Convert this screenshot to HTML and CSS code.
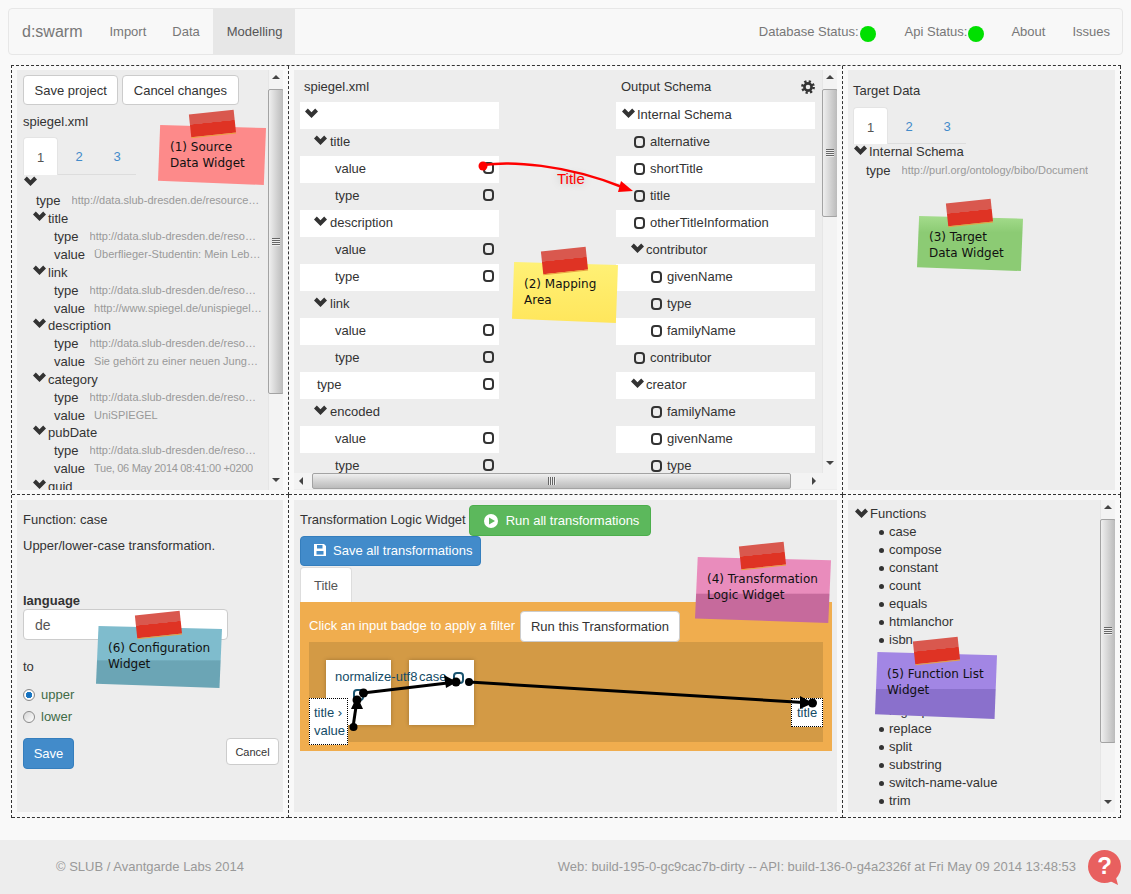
FILE: index.html
```html
<!DOCTYPE html>
<html lang="en">
<head>
    <meta charset="UTF-8">
    <title>d:swarm</title>
    <link rel="stylesheet" href="styles.css">
</head>
<body>
    <svg class="defs" width="0" height="0">
        <symbol id="chev" viewBox="0 0 12 9"><polygon points="0,3 2.6,0.4 6,3.8 9.4,0.4 12,3 6,9" /></symbol>
    </svg>

    <nav class="navbar">
        <span class="brand">d:swarm</span>
        <a class="nav-link">Import</a>
        <a class="nav-link">Data</a>
        <a class="nav-link active">Modelling</a>
        <span class="nav-right">
            <a class="nav-status db">Database Status:<i class="dot"></i></a>
            <a class="nav-status">Api Status:<i class="dot"></i></a>
            <a class="nav-link">About</a>
            <a class="nav-link">Issues</a>
        </span>
    </nav>

    <div class="workspace">
        <!-- source data -->
        <section class="cell">
            <div class="panel panel-row">
                <div class="panel-body">
                    <div class="btn-row">
                        <button class="btn">Save project</button>
                        <button class="btn">Cancel changes</button>
                    </div>
                    <div class="file-name">spiegel.xml</div>
                    <ul class="tabs">
                        <li class="tab active">1</li>
                        <li class="tab">2</li>
                        <li class="tab">3</li>
                    </ul>
                    <div class="tree">
                        <div class="t-row"><svg class="chev"><use href="#chev"/></svg></div>
                        <div class="t-row lv1 is-type"><span>type</span><em>http://data.slub-dresden.de/resources/1/schema#type</em></div>
                        <div class="t-row lv0"><svg class="chev"><use href="#chev"/></svg><span>title</span></div>
                        <div class="t-row lv2 is-type"><span>type</span><em>http://data.slub-dresden.de/resources/1/schema</em></div>
                        <div class="t-row lv2"><span>value</span><em>Überflieger-Studentin: Mein Leben als Wunderkind</em></div>
                        <div class="t-row lv0"><svg class="chev"><use href="#chev"/></svg><span>link</span></div>
                        <div class="t-row lv2 is-type"><span>type</span><em>http://data.slub-dresden.de/resources/1/schema</em></div>
                        <div class="t-row lv2"><span>value</span><em>http://www.spiegel.de/unispiegel/studium/artikel</em></div>
                        <div class="t-row lv0"><svg class="chev"><use href="#chev"/></svg><span>description</span></div>
                        <div class="t-row lv2 is-type"><span>type</span><em>http://data.slub-dresden.de/resources/1/schema</em></div>
                        <div class="t-row lv2"><span>value</span><em>Sie gehört zu einer neuen Jungen Generation</em></div>
                        <div class="t-row lv0"><svg class="chev"><use href="#chev"/></svg><span>category</span></div>
                        <div class="t-row lv2 is-type"><span>type</span><em>http://data.slub-dresden.de/resources/1/schema</em></div>
                        <div class="t-row lv2"><span>value</span><em>UniSPIEGEL</em></div>
                        <div class="t-row lv0"><svg class="chev"><use href="#chev"/></svg><span>pubDate</span></div>
                        <div class="t-row lv2 is-type"><span>type</span><em>http://data.slub-dresden.de/resources/1/schema</em></div>
                        <div class="t-row lv2"><span>value</span><em class="date">Tue, 06 May 2014 08:41:00 +0200</em></div>
                        <div class="t-row lv0"><svg class="chev"><use href="#chev"/></svg><span>guid</span></div>
                    </div>
                </div>
                <div class="vscroll">
                    <i class="arrow up"></i>
                    <div class="thumb thumb-source"><i class="grip"></i></div>
                    <i class="arrow down"></i>
                </div>
            </div>
        </section>

        <!-- mapping area -->
        <section class="cell">
            <div class="panel panel-col">
                <div class="map-view">
                    <div class="map-body">
                        <div class="map-col">
                            <div class="map-head">spiegel.xml</div>
                            <div class="m-row"><svg class="chev m5"><use href="#chev"/></svg></div>
                            <div class="m-row"><svg class="chev m14"><use href="#chev"/></svg><span>title</span></div>
                            <div class="m-row leaf"><span>value</span><i class="port"></i></div>
                            <div class="m-row leaf"><span>type</span><i class="port"></i></div>
                            <div class="m-row"><svg class="chev m14"><use href="#chev"/></svg><span>description</span></div>
                            <div class="m-row leaf"><span>value</span><i class="port"></i></div>
                            <div class="m-row leaf"><span>type</span><i class="port"></i></div>
                            <div class="m-row"><svg class="chev m14"><use href="#chev"/></svg><span>link</span></div>
                            <div class="m-row leaf"><span>value</span><i class="port"></i></div>
                            <div class="m-row leaf"><span>type</span><i class="port"></i></div>
                            <div class="m-row root-leaf"><span>type</span><i class="port"></i></div>
                            <div class="m-row"><svg class="chev m14"><use href="#chev"/></svg><span>encoded</span></div>
                            <div class="m-row leaf"><span>value</span><i class="port"></i></div>
                            <div class="m-row leaf"><span>type</span><i class="port"></i></div>
                        </div>
                        <div class="map-col out">
                            <div class="map-head">Output Schema
                                <svg class="gear" viewBox="0 0 14 14"><circle cx="7" cy="7" r="3.6" fill="none" stroke="#333" stroke-width="2.6"/><circle cx="7" cy="7" r="5.6" fill="none" stroke="#333" stroke-width="2.6" stroke-dasharray="2.2 2.2"/></svg>
                            </div>
                            <div class="m-row"><svg class="chev m6"><use href="#chev"/></svg><span>Internal Schema</span></div>
                            <div class="m-row o1"><i class="port"></i><span>alternative</span></div>
                            <div class="m-row o1"><i class="port"></i><span>shortTitle</span></div>
                            <div class="m-row o1"><i class="port"></i><span>title</span></div>
                            <div class="m-row o1"><i class="port"></i><span>otherTitleInformation</span></div>
                            <div class="m-row"><svg class="chev m15"><use href="#chev"/></svg><span>contributor</span></div>
                            <div class="m-row o2"><i class="port"></i><span>givenName</span></div>
                            <div class="m-row o2"><i class="port"></i><span>type</span></div>
                            <div class="m-row o2"><i class="port"></i><span>familyName</span></div>
                            <div class="m-row o1"><i class="port"></i><span>contributor</span></div>
                            <div class="m-row"><svg class="chev m15"><use href="#chev"/></svg><span>creator</span></div>
                            <div class="m-row o2"><i class="port"></i><span>familyName</span></div>
                            <div class="m-row o2"><i class="port"></i><span>givenName</span></div>
                            <div class="m-row o2"><i class="port"></i><span>type</span></div>
                        </div>
                    </div>
                    <div class="vscroll">
                        <i class="arrow up"></i>
                        <div class="thumb thumb-map"><i class="grip"></i></div>
                        <i class="arrow down"></i>
                    </div>
                </div>
                <div class="hscroll">
                    <i class="arrow left"></i>
                    <div class="thumb-h"><i class="grip-h"></i></div>
                    <i class="arrow right"></i>
                </div>
            </div>
        </section>

        <!-- target data -->
        <section class="cell">
            <div class="panel target">
                <div class="target-title">Target Data</div>
                <ul class="tabs">
                    <li class="tab active">1</li>
                    <li class="tab">2</li>
                    <li class="tab">3</li>
                </ul>
                <div class="tree tree-target">
                    <div class="t-row"><svg class="chev"><use href="#chev"/></svg><span>Internal Schema</span></div>
                    <div class="t-row lv1-t is-type"><span>type</span><em>http://purl.org/ontology/bibo/Document</em></div>
                </div>
            </div>
        </section>

        <!-- configuration -->
        <section class="cell cell-low">
            <div class="panel config">
                <p class="fn-title">Function: case</p>
                <p class="fn-desc">Upper/lower-case transformation.</p>
                <label class="fn-label">language</label>
                <div class="fn-input">de</div>
                <div class="fn-to">to</div>
                <div class="radio-row"><i class="radio checked"></i>upper</div>
                <div class="radio-row"><i class="radio"></i>lower</div>
                <div class="config-btns">
                    <button class="btn btn-primary btn-save">Save</button>
                    <button class="btn btn-sm">Cancel</button>
                </div>
            </div>
        </section>

        <!-- transformation logic -->
        <section class="cell cell-low">
            <div class="panel logic">
                <div class="logic-head">
                    <span>Transformation Logic Widget</span>
                    <button class="btn btn-success">
                        <svg class="btn-ico" viewBox="0 0 14 14"><circle cx="7" cy="7" r="7" fill="#fff"/><polygon points="5,3.5 11,7 5,10.5" fill="#5cb85c"/></svg>Run all transformations
                    </button>
                </div>
                <button class="btn btn-primary btn-saveall">
                    <svg class="btn-ico small" viewBox="0 0 12 12"><path d="M0 0h10l2 2v10H0z" fill="#fff"/><rect x="3" y="1" width="5.5" height="3.5" fill="#428bca"/><rect x="2.5" y="7" width="7" height="3.6" fill="#428bca"/></svg>Save all transformations
                </button>
                <div class="logic-tab">Title</div>
                <div class="job">
                    <div class="job-head">
                        <span>Click an input badge to apply a filter</span>
                        <button class="btn">Run this Transformation</button>
                    </div>
                    <div class="job-canvas">
                        <div class="fn-node node-a">normalize-utf8<i class="port port-a"></i></div>
                        <div class="fn-node node-b">case<i class="port port-b"></i></div>
                        <div class="io-box io-in">title ›<br>value</div>
                        <div class="io-box io-out">title</div>
                    </div>
                </div>
            </div>
        </section>

        <!-- function list -->
        <section class="cell cell-low">
            <div class="panel panel-row">
                <div class="fn-list">
                    <div class="fn-list-head"><svg class="chev"><use href="#chev"/></svg><span>Functions</span></div>
                    <ul>
                        <li>case</li>
                        <li>compose</li>
                        <li>constant</li>
                        <li>count</li>
                        <li>equals</li>
                        <li>htmlanchor</li>
                        <li>isbn</li>
                        <li>normalize-form</li>
                        <li>not-equals</li>
                        <li>occurrence</li>
                        <li>regexp</li>
                        <li>replace</li>
                        <li>split</li>
                        <li>substring</li>
                        <li>switch-name-value</li>
                        <li>trim</li>
                    </ul>
                </div>
                <div class="vscroll">
                    <i class="arrow up"></i>
                    <div class="thumb thumb-fn"><i class="grip"></i></div>
                    <i class="arrow down"></i>
                </div>
            </div>
        </section>
    </div>

    <footer class="footer">
        <span>© SLUB / Avantgarde Labs 2014</span>
        <span class="build">Web: build-195-0-gc9cac7b-dirty -- API: build-136-0-g4a2326f at Fri May 09 2014 13:48:53</span>
        <svg class="help" viewBox="0 0 33 35"><circle cx="16.5" cy="16.5" r="16.5" fill="#e8605f"/><path d="M20 30l10 5-3-11z" fill="#e8605f"/><text x="16.5" y="24" text-anchor="middle">?</text></svg>
    </footer>

    <!-- connectors drawn over the widgets -->
    <svg class="wires" width="1131" height="894" viewBox="0 0 1131 894">
        <path d="M483 165C510 161 565 164 622 187" fill="none" stroke="#f00" stroke-width="2.5"/>
        <polygon points="633,191 621,181 618,192" fill="#f00"/>
        <circle cx="483" cy="166" r="4.5" fill="#f00"/>

        <g stroke="#000" stroke-width="3" fill="none">
            <path d="M353 727L357 700"/>
            <path d="M363 693L456 682"/>
            <path d="M469 682L812 703"/>
        </g>
        <g fill="#000">
            <polygon points="357,696 351,709 363,709"/>
            <polygon points="457,682 444,675 446,688"/>
            <polygon points="813,703 800,696 800,709"/>
            <circle cx="353.500" cy="727" r="4"/>
            <circle cx="357" cy="700" r="4.500"/>
            <circle cx="363.500" cy="693" r="4.500"/>
            <circle cx="456" cy="682" r="4.500"/>
            <circle cx="469" cy="682" r="4"/>
            <circle cx="812.500" cy="703" r="4.500"/>
        </g>
    </svg>
    <span class="wire-label">Title</span>

    <!-- sticky notes -->
    <div class="note note-source"><i class="tape"></i><p>(1) Source<br>Data Widget</p></div>
    <div class="note note-map"><i class="tape"></i><p>(2) Mapping<br>Area</p></div>
    <div class="note note-target"><i class="tape"></i><p>(3) Target<br>Data Widget</p></div>
    <div class="note note-logic"><i class="tape"></i><p>(4) Transformation<br>Logic Widget</p></div>
    <div class="note note-fn"><i class="tape"></i><p>(5) Function List<br>Widget</p></div>
    <div class="note note-config"><i class="tape"></i><p>(6) Configuration<br>Widget</p></div>
</body>
</html>
```

FILE: styles.css
```css
* {
    box-sizing: border-box;
}
html, body {
    height: 894px;
    overflow: hidden;
}
body {
    position: relative;
    margin: 0;
    background-color: #f9f9f9;
    color: #333;
    font-family: "Liberation Sans", Arial, sans-serif;
    font-size: 13px;
    line-height: 20px;
}
.defs {
    position: absolute;
}
ul {
    list-style: none;
    margin: 0;
    padding: 0;
}
p {
    margin: 0;
}

/* navbar */
.navbar {
    display: flex;
    align-items: stretch;
    height: 47px;
    margin: 8px 8px 0;
    background-color: #f8f8f8;
    border: 1px solid #e7e7e7;
    border-radius: 4px;
    color: #777;
}
.brand {
    align-self: center;
    padding: 0 14px 0 13px;
    font-size: 16px;
}
.nav-link {
    display: flex;
    align-items: center;
    padding: 0 13px;
}
.nav-link.active {
    padding: 0 13px 0 14px;
    background-color: #e7e7e7;
    color: #555;
}
.nav-right {
    display: flex;
    margin-left: auto;
}
.nav-right .nav-link {
    padding: 0 13.500px;
}
.nav-right .nav-link:last-child {
    padding-right: 12px;
}
.nav-status {
    display: flex;
    align-items: center;
    padding: 0 13.500px;
}
.nav-status.db {
    margin-right: 2px;
}
.dot {
    width: 16px;
    height: 16px;
    margin: 4px 0 0 1px;
    border-radius: 50%;
    background-color: #00e000;
}

/* widget grid */
.workspace {
    display: grid;
    grid-template-columns: 277px 554px 278px;
    grid-template-rows: 429px 323px;
    width: 1110px;
    margin: 10px 0 0 11px;
    border-top: 1px dashed #333;
    border-left: 1px dashed #333;
}
.cell {
    min-width: 0;
    min-height: 0;
    padding: 4px 5px;
    border-right: 1px dashed #333;
    border-bottom: 1px dashed #333;
}
.cell-low {
    padding: 5px 5px 5px;
}
.panel {
    height: 100%;
    background-color: #ededed;
    overflow: hidden;
}
.panel-row {
    display: flex;
}
.panel-col {
    display: flex;
    flex-direction: column;
}

/* buttons */
.btn {
    height: 31px;
    padding: 0 10px;
    background-color: #fff;
    border: 1px solid #ccc;
    border-radius: 4px;
    color: #333;
    font-family: inherit;
    font-size: 13px;
    white-space: nowrap;
}
.btn-primary {
    background-color: #428bca;
    border-color: #357ebd;
    color: #fff;
}
.btn-success {
    display: inline-flex;
    align-items: center;
    background-color: #5cb85c;
    border-color: #4cae4c;
    color: #fff;
}
.btn-sm {
    width: 53px;
    height: 27px;
    padding: 0;
    font-size: 11px;
}
.btn-ico {
    width: 14px;
    height: 14px;
    margin-right: 8px;
    flex: none;
}
.btn-ico.small {
    width: 12px;
    height: 12px;
    margin-right: 7px;
}

/* chevrons */
.chev {
    width: 13px;
    height: 10px;
    flex: none;
    fill: #333;
}

/* source widget */
.panel-body {
    flex: 1;
    min-width: 0;
    padding: 5px 6px 0;
}
.btn-row {
    display: flex;
    gap: 4px;
}
.btn-row .btn {
    height: 30px;
    padding: 0 10.500px;
}
.file-name {
    margin-top: 7px;
}
.tabs {
    display: flex;
    height: 38px;
    width: 113px;
    margin-top: 5px;
    border-bottom: 1px solid #ddd;
}
.tab {
    width: 38px;
    padding-top: 10px;
    text-align: center;
    color: #428bca;
}
.tab.active {
    width: 35px;
    height: 38px;
    margin-right: 2px;
    background-color: #fff;
    border: 1px solid #e4e4e4;
    border-bottom: 0;
    border-radius: 4px 4px 0 0;
    color: #555;
}
.tree {
    height: 316px;
    overflow: hidden;
    margin-top: -0.4px;
    margin-left: 1px;
    line-height: 17.850px;
}
.t-row {
    display: flex;
    height: 17.850px;
    white-space: nowrap;
}
.t-row .chev {
    margin-top: 1px;
    margin-right: 2px;
}
.t-row em {
    min-width: 0;
    margin-left: 9px;
    overflow: hidden;
    text-overflow: ellipsis;
    color: #999;
    font-size: 11px;
    font-style: normal;
}
.t-row.is-type em {
    margin-left: 11px;
}
.t-row em.date {
    letter-spacing: -0.3px;
}
.lv0 {
    padding-left: 9px;
}
.lv1 {
    padding-left: 12px;
}
.lv2 {
    padding-left: 30px;
}

/* fake scrollbars */
.vscroll {
    display: flex;
    flex: none;
    flex-direction: column;
    width: 15px;
    background-color: #f3f3f3;
    border-left: 1px solid #e6e6e6;
}
.arrow {
    display: block;
    flex: none;
    width: 0;
    height: 0;
    border: 4px solid transparent;
}
.arrow.up {
    margin: 5px 0 10px 3px;
    border-top: 0;
    border-bottom-color: #444;
}
.arrow.down {
    margin: auto 0 8px 3px;
    border-bottom: 0;
    border-top-color: #444;
}
.thumb {
    display: flex;
    align-items: center;
    justify-content: center;
    flex: none;
    margin-right: -1px;
    margin-left: -1px;
    background: linear-gradient(to right, #efefef, #cfcfcf 60%, #bbb);
    border: 1px solid #a3a3a3;
    border-radius: 2px;
}
.thumb-source {
    height: 305px;
}
.thumb-map {
    height: 128px;
}
.thumb-fn {
    height: 224px;
}
.grip {
    width: 8px;
    height: 8px;
    background: repeating-linear-gradient(to bottom, #666 0, #666 1px, #eee 1px, #eee 2px);
}

/* mapping widget */
.map-view {
    display: flex;
    flex: 1;
    min-height: 0;
}
.map-body {
    display: flex;
    flex: 1;
    gap: 117px;
    padding-left: 6px;
    overflow: hidden;
}
.map-col {
    width: 199px;
    flex: none;
}
.map-head {
    display: flex;
    align-items: center;
    justify-content: space-between;
    height: 32px;
    padding: 1px 0 0 4px;
}
.map-col.out .map-head {
    padding: 1px 0 0 5px;
}
.gear {
    width: 14px;
    height: 14px;
}
.m-row {
    display: flex;
    align-items: center;
    height: 27px;
    padding-bottom: 2px;
}
.m-row:nth-child(even) {
    background-color: #fff;
}
.m-row .chev {
    margin-top: -4px;
    margin-right: 3px;
}
.m5 {
    margin-left: 5px;
}
.m14 {
    margin-left: 14px;
}
.m6 {
    margin-left: 6px;
    margin-right: 2px !important;
}
.m15 {
    margin-left: 15px;
    margin-right: 2px !important;
}
.leaf {
    padding-left: 35px;
}
.root-leaf {
    padding-left: 17px;
}
.port {
    flex: none;
    width: 11px;
    height: 12px;
    margin-top: -2px;
    border: 2px solid #333;
    border-radius: 4px;
}
.leaf .port, .root-leaf .port {
    margin-left: auto;
    margin-right: 5px;
}
.o1 {
    padding-left: 18px;
}
.o2 {
    padding-left: 35px;
}
.o1 .port, .o2 .port {
    margin-top: 0;
    margin-right: 5px;
}
.hscroll {
    display: flex;
    flex: none;
    align-items: center;
    height: 16px;
    margin-bottom: 1px;
    background-color: #f3f3f3;
}
.arrow.left {
    margin: 0 9px 0 5px;
    border-left: 0;
    border-right-color: #444;
}
.arrow.right {
    margin: 0 0 0 auto;
    margin-right: 21px;
    border-right: 0;
    border-left-color: #444;
}
.thumb-h {
    display: flex;
    align-items: center;
    justify-content: center;
    width: 479px;
    height: 16px;
    background: linear-gradient(to bottom, #efefef, #cfcfcf 60%, #bbb);
    border: 1px solid #a3a3a3;
    border-radius: 2px;
}
.grip-h {
    width: 8px;
    height: 8px;
    background: repeating-linear-gradient(to right, #666 0, #666 1px, #eee 1px, #eee 2px);
}

/* target widget */
.target {
    padding: 11px 5px 0;
}
.target-title {
    margin-bottom: 6px;
}
.target .tabs {
    margin-top: 0;
    height: 37px;
}
.target .tab.active {
    height: 37px;
}
.tree-target {
    height: auto;
    margin-left: 1px;
    margin-top: -2px;
    line-height: 19px;
}
.tree-target .t-row {
    height: 19px;
}
.lv1-t {
    padding-left: 12px;
    margin-top: 0;
}
.tree-target .chev {
    margin-top: 3px;
}

/* configuration widget */
.config {
    padding: 10px 6px 0;
}
.fn-desc {
    margin-top: 6px;
}
.fn-label {
    display: block;
    margin-top: 35px;
    font-weight: bold;
}
.fn-input {
    height: 31px;
    width: 205px;
    margin-top: -2px;
    padding: 5px 11px;
    background-color: #fff;
    border: 1px solid #ccc;
    border-radius: 4px;
    color: #555;
    font-size: 14px;
}
.fn-to {
    margin-top: 17px;
}
.radio-row {
    display: flex;
    align-items: center;
    height: 22px;
    color: #3f6b47;
}
.fn-to + .radio-row {
    margin-top: 7px;
}
.radio {
    width: 12px;
    height: 12px;
    margin-right: 6px;
    border: 1px solid #8a8a8a;
    border-radius: 50%;
    background: linear-gradient(135deg, #d5d5d5, #fff);
}
.radio.checked {
    background: radial-gradient(circle, #1668b3 0, #1c7cc8 3px, #fff 3.500px, #ddd 100%);
}
.config-btns {
    display: flex;
    align-items: flex-start;
    justify-content: space-between;
    width: 256px;
    margin-top: 10px;
}
.btn-save {
    width: 51px;
    padding: 0;
}

/* transformation logic widget */
.logic {
    padding: 5px 6px 0;
}
.logic-head {
    display: flex;
    align-items: center;
    gap: 3px;
}
.logic-head span {
    margin-top: -2px;
}
.logic-head .btn {
    width: 182px;
    padding: 0 14px;
}
.btn-saveall {
    display: flex;
    align-items: center;
    width: 181px;
    height: 30px;
    padding: 0 13px 2px;
}
.logic-tab {
    width: 52px;
    height: 35px;
    margin-top: 1px;
    padding-top: 8px;
    background-color: #fff;
    border: 1px solid #ddd;
    border-bottom: 0;
    border-radius: 4px 4px 0 0;
    text-align: center;
    color: #555;
}
.job {
    width: 532px;
    height: 149px;
    padding: 0 9px;
    background-color: #f0ad4e;
}
.job-head {
    display: flex;
    align-items: flex-start;
    gap: 5px;
    height: 40px;
    padding-top: 9px;
    color: #fff;
}
.job-head span {
    margin-top: 5px;
}
.job-canvas {
    position: relative;
    z-index: 0;
    height: 100px;
    background-color: #d39a45;
}
.fn-node {
    position: absolute;
    top: 18px;
    width: 65px;
    height: 65px;
    padding: 7px 0 0 9px;
    background-color: #fff;
    box-shadow: 0 0 4px rgba(0, 0, 0, 0.25);
    color: #134b66;
    white-space: nowrap;
}
.node-a {
    z-index: 1;
    left: 17px;
}
.node-b {
    left: 100px;
    padding-left: 10px;
}
.fn-node .port {
    position: absolute;
    margin: 0;
    border-color: #1a5470;
}
.port-a {
    left: 27px;
    top: 29px;
}
.port-b {
    left: 44px;
    top: 12px;
}
.io-box {
    z-index: 2;
    position: absolute;
    top: 56px;
    background-color: #fff;
    border: 1px dotted #000;
    color: #134b66;
    line-height: 18px;
    white-space: nowrap;
}
.io-in {
    left: 0;
    width: 39px;
    height: 47px;
    padding: 5px 0 0 4px;
}
.io-out {
    left: 482px;
    width: 32px;
    height: 29px;
    padding: 5px 0 0 5px;
}

/* function list widget */
.fn-list {
    flex: 1;
    min-width: 0;
    padding: 5px 0 0 7px;
    overflow: hidden;
    line-height: 17.930px;
}
.fn-list-head {
    display: flex;
    align-items: center;
    height: 18px;
}
.fn-list-head .chev {
    margin-top: -2px;
    margin-right: 2px;
}
.fn-list ul {
    padding-left: 34px;
}
.fn-list li {
    position: relative;
}
.fn-list li::before {
    content: "";
    position: absolute;
    top: 7px;
    left: -10px;
    width: 5px;
    height: 5px;
    border-radius: 50%;
    background-color: #333;
}

/* footer */
.footer {
    display: flex;
    align-items: center;
    height: 54px;
    margin-top: 22px;
    padding: 0 10px 0 56px;
    background-color: #ededed;
    color: #999;
}
.build {
    margin-left: auto;
    letter-spacing: -0.03px;
}
.help {
    width: 33px;
    height: 35px;
    margin-left: 12px;
}
.help text {
    fill: #fff;
    font-family: "Liberation Sans", Arial, sans-serif;
    font-size: 24px;
    font-weight: bold;
}

/* overlays */
.wires {
    position: absolute;
    z-index: 3;
    top: 0;
    left: 0;
    pointer-events: none;
}
.wire-label {
    position: absolute;
    z-index: 3;
    top: 169px;
    left: 557px;
    color: #f00;
    font-size: 15px;
    text-shadow: 0 0 8px rgba(0, 0, 0, 0.25);
}
.note {
    position: absolute;
    z-index: 4;
    padding: 14px 0 0 12px;
    color: #111;
    font-family: "DejaVu Sans", sans-serif;
    font-size: 12px;
    line-height: 16px;
}
.note::before {
    content: "";
    position: absolute;
    inset: 0;
    clip-path: polygon(2% 0, 100% 5%, 98% 100%, 0 93%);
    background: var(--paper);
}
.note p {
    position: relative;
    white-space: nowrap;
}
.tape {
    position: absolute;
    z-index: 1;
    top: -13px;
    left: 32px;
    width: 45px;
    height: 24px;
    transform: rotate(-6deg);
    background: linear-gradient(to bottom, #d9584e 0, #d9584e 45%, #df3324 46%, #df3324 100%);
    border-bottom: 1px solid #e8a040;
}
.note-source {
    top: 125px;
    left: 158px;
    width: 108px;
    height: 60px;
    --paper: #fd8a8a;
}
.note-map {
    top: 262px;
    left: 512px;
    width: 106px;
    height: 61px;
    --paper: linear-gradient(to bottom, #fff176, #ffe65c);
}
.note-map .tape {
    left: 30px;
}
.note-target {
    top: 216px;
    left: 917px;
    width: 106px;
    height: 55px;
    padding-top: 13px;
    --paper: linear-gradient(to bottom, #a4dc8c 0, #8ccb74 30%);
}
.note-target .tape {
    top: -15px;
    left: 30px;
}
.note-logic {
    top: 557px;
    left: 695px;
    width: 136px;
    height: 66px;
    --paper: linear-gradient(to bottom, #e98cbc 0, #e98cbc 55%, #c66a9c 56%);
}
.note-logic .tape {
    left: 45px;
}
.note-fn {
    top: 652px;
    left: 875px;
    width: 122px;
    height: 67px;
    --paper: linear-gradient(to bottom, #a286e4 0, #a286e4 55%, #8a70cc 56%);
}
.note-fn .tape {
    left: 39px;
}
.note-config {
    top: 626px;
    left: 96px;
    width: 126px;
    height: 62px;
    --paper: linear-gradient(to bottom, #7fbccd 0, #7fbccd 55%, #6ba5b5 56%);
}
.note-config .tape {
    left: 40px;
}
```
